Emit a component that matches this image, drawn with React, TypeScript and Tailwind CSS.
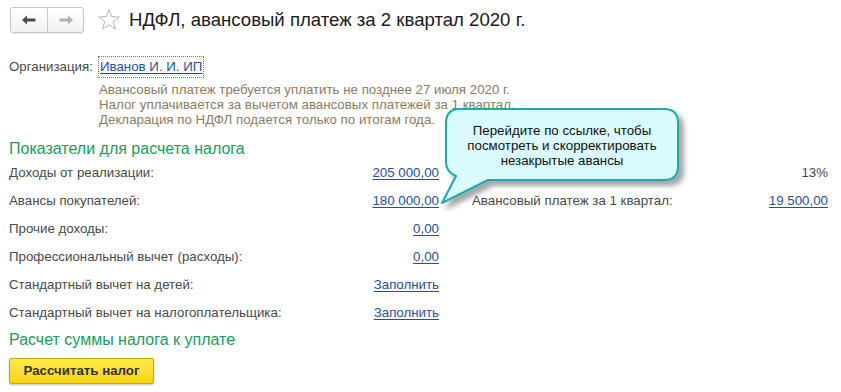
import React from 'react';

const rows = [
  { label: 'Доходы от реализации:', value: '205 000,00' },
  { label: 'Авансы покупателей:', value: '180 000,00' },
  { label: 'Прочие доходы:', value: '0,00' },
  { label: 'Профессиональный вычет (расходы):', value: '0,00' },
  { label: 'Стандартный вычет на детей:', value: 'Заполнить' },
  { label: 'Стандартный вычет на налогоплательщика:', value: 'Заполнить' },
];

function Callout() {
  return (
    <div className="absolute left-[436px] top-[104px] w-[260px] h-[108px]">
      <svg width="260" height="108" className="absolute inset-0">
        <defs>
          <filter id="sh" x="-10%" y="-10%" width="130%" height="140%">
            <feDropShadow dx="5" dy="5" stdDeviation="2.5" floodColor="#000" floodOpacity="0.35" />
          </filter>
        </defs>
        <path
          d="M24 5 H228 Q242 5 242 19 V62 Q242 76 228 76 H52 L6 99 L20 72 Q10 68 10 58 V19 Q10 5 24 5 Z"
          fill="#d9fbfd"
          stroke="#1aa9b3"
          strokeWidth="2"
          strokeLinejoin="round"
          filter="url(#sh)"
        />
      </svg>
      <div className="absolute left-[10px] top-[19px] w-[232px] text-center text-[13.3px] leading-[15px] text-[#111]">
        Перейдите по ссылке, чтобы
        <br />
        посмотреть и скорректировать
        <br />
        незакрытые авансы
      </div>
    </div>
  );
}

export default function App() {
  return (
    <div
      className="relative w-[841px] h-[392px] bg-white text-[13.3px] text-[#4a4a4a] overflow-hidden"
      style={{ fontFamily: '"Liberation Sans", Arial, sans-serif' }}
    >
      <div className="flex items-center pl-[10px] pt-[7px]">
        <div className="flex h-[26px] w-[74px] rounded-[3px] border border-[#c4c4c4] bg-gradient-to-b from-white to-[#f1f1f1] shadow-[0_1px_1px_rgba(0,0,0,0.08)]">
          <div className="flex w-[37px] items-center justify-center border-r border-[#c8c8c8]">
            <svg width="14" height="10" viewBox="0 0 14 10">
              <path d="M0 5 L5 0.5 V3.5 H13.5 V6.5 H5 V9.5 Z" fill="#4d4d4d" />
            </svg>
          </div>
          <div className="flex flex-1 items-center justify-center">
            <svg width="14" height="10" viewBox="0 0 14 10">
              <path d="M14 5 L9 0.5 V3.5 H0.5 V6.5 H9 V9.5 Z" fill="#b0b0b0" />
            </svg>
          </div>
        </div>
        <svg width="24" height="24" viewBox="0 0 24 24" className="ml-[13px]">
          <path
            d="M12 1.5 L14.7 8.6 L22.3 8.9 L16.3 13.6 L18.4 21 L12 16.8 L5.6 21 L7.7 13.6 L1.7 8.9 L9.3 8.6 Z"
            fill="none"
            stroke="#b5b5b5"
            strokeWidth="1"
            strokeLinejoin="round"
          />
        </svg>
        <h1 className="ml-[8px] text-[18.6px] leading-[26px] text-[#1a1a1a]">
          НДФЛ, авансовый платеж за 2 квартал 2020 г.
        </h1>
      </div>

      <div className="px-[9px] pt-[24px]">
        <div className="flex items-center">
          <span className="w-[90px]">Организация:</span>
          <span className="text-[#2451a4] underline underline-offset-2 outline-1 outline-dotted outline-[#777] px-[1px]">
            Иванов И. И. ИП
          </span>
        </div>
        <div className="ml-[90px] mt-[5px] leading-[15px] text-[#8b7d61]">
          <div>Авансовый платеж требуется уплатить не позднее 27 июля 2020 г.</div>
          <div>Налог уплачивается за вычетом авансовых платежей за 1 квартал.</div>
          <div>Декларация по НДФЛ подается только по итогам года.</div>
        </div>

        <div className="mt-[12px] text-[16px] leading-[20px] text-[#16a05a]">Показатели для расчета налога</div>

        <div className="flex">
          <div className="w-[430px]">
            {rows.map((r) => (
              <div key={r.label} className="flex h-[28px] items-center justify-between">
                <span>{r.label}</span>
                <span className="text-[#2451a4] underline underline-offset-2">{r.value}</span>
              </div>
            ))}
          </div>
          <div className="ml-[33px] w-[356px]">
            <div className="flex h-[28px] items-center justify-end">
              <span>13%</span>
            </div>
            <div className="flex h-[28px] items-center justify-between">
              <span>Авансовый платеж за 1 квартал:</span>
              <span className="text-[#2451a4] underline underline-offset-2">19 500,00</span>
            </div>
          </div>
        </div>

        <div className="mt-[3px] text-[16px] leading-[20px] text-[#16a05a]">Расчет суммы налога к уплате</div>
        <button className="mt-[8px] h-[26px] w-[145px] rounded-[2px] border border-[#c9a800] bg-gradient-to-b from-[#ffe94a] to-[#f5d400] text-[13.3px] font-bold text-[#333] shadow-[0_1px_2px_rgba(0,0,0,0.25)]">
          Рассчитать налог
        </button>
      </div>

      <Callout />
    </div>
  );
}
